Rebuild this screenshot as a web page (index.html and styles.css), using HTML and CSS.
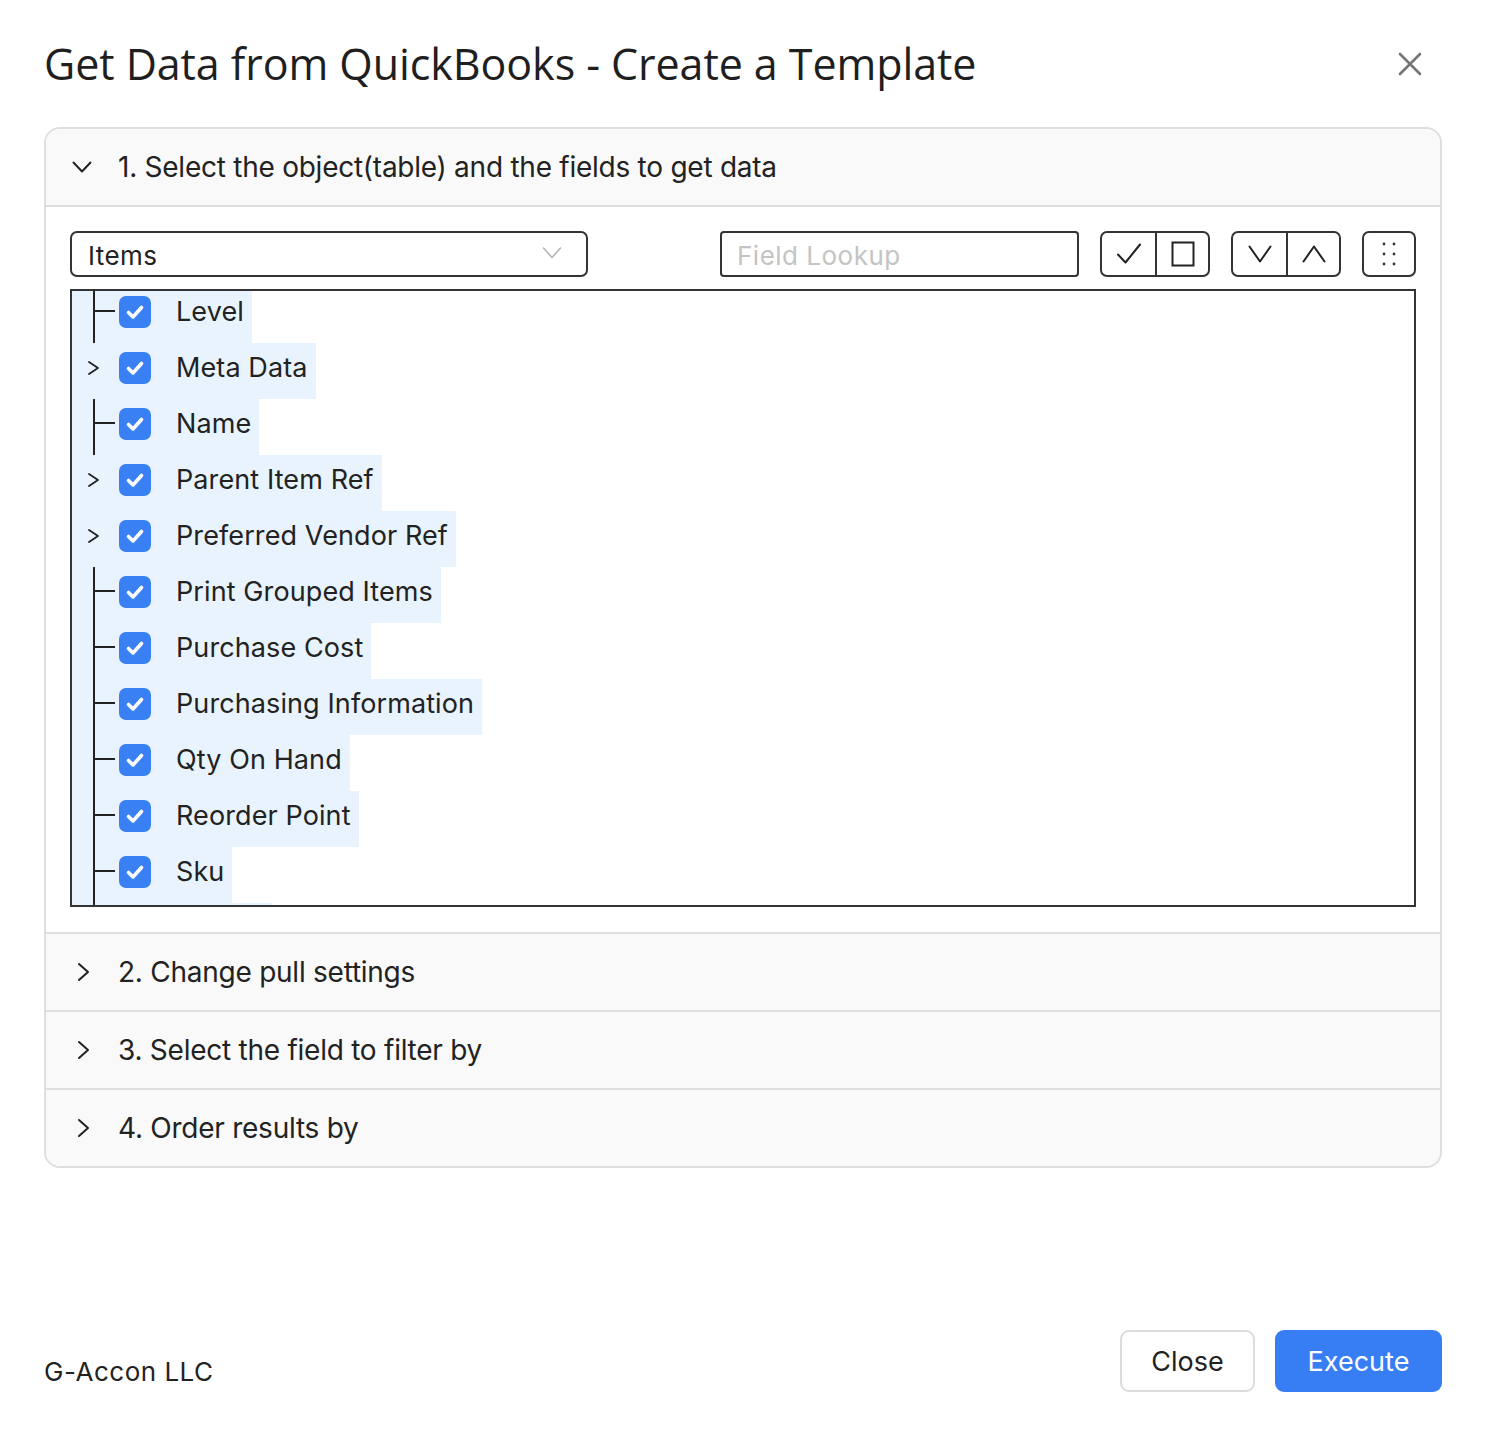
FILE: index.html
```html
<!DOCTYPE html>
<html lang="en">
<head>
<meta charset="utf-8">
<title>Get Data from QuickBooks - Create a Template</title>
<link rel="stylesheet" href="styles.css">
</head>
<body>
<div class="page">
  <header class="title-bar">
    <h1 class="title">Get Data from QuickBooks - Create a Template</h1>
    <button class="close-x" aria-label="Close">
      <svg width="24" height="24" viewBox="0 0 24 24"><path d="M2 2L22 22M22 2L2 22" stroke="#757575" stroke-width="2.6" stroke-linecap="round" fill="none"/></svg>
    </button>
  </header>

  <div class="accordion">
    <section class="acc open">
      <div class="acc-head">
        <svg class="acc-chev" width="20" height="14" viewBox="0 0 20 14"><path d="M1.5 2.5L10 11.5L18.5 2.5" stroke="#222" stroke-width="2" fill="none" stroke-linecap="round" stroke-linejoin="round"/></svg>
        <span>1. Select the object(table) and the fields to get data</span>
      </div>
      <div class="acc-body">
        <div class="toolbar">
          <div class="select">
            <span>Items</span>
            <svg width="20" height="14" viewBox="0 0 20 14"><path d="M1.5 2L10 11.5L18.5 2" stroke="#b5b5b5" stroke-width="1.6" fill="none" stroke-linecap="round" stroke-linejoin="round"/></svg>
          </div>
          <div class="lookup">Field Lookup</div>
          <div class="btn-group">
            <div class="btn-cell">
              <svg width="26" height="24" viewBox="0 0 26 24"><path d="M2 12.5L9.5 20.5L24 2.5" stroke="#222" stroke-width="2" fill="none" stroke-linecap="round" stroke-linejoin="round"/></svg>
            </div>
            <div class="btn-cell">
              <svg width="24" height="26" viewBox="0 0 24 26"><rect x="1.5" y="1.5" width="21" height="23" stroke="#222" stroke-width="2" fill="none"/></svg>
            </div>
          </div>
          <div class="btn-group">
            <div class="btn-cell">
              <svg width="24" height="18" viewBox="0 0 24 18"><path d="M1.5 1.5L12 16.5L22.5 1.5" stroke="#222" stroke-width="2" fill="none" stroke-linecap="round" stroke-linejoin="round"/></svg>
            </div>
            <div class="btn-cell">
              <svg width="24" height="18" viewBox="0 0 24 18"><path d="M1.5 16.5L12 1.5L22.5 16.5" stroke="#222" stroke-width="2" fill="none" stroke-linecap="round" stroke-linejoin="round"/></svg>
            </div>
          </div>
          <div class="btn-group">
            <div class="btn-cell">
              <svg width="14" height="24" viewBox="0 0 14 24"><g fill="#333"><circle cx="2" cy="2" r="1.4"/><circle cx="12" cy="2" r="1.4"/><circle cx="2" cy="12" r="1.4"/><circle cx="12" cy="12" r="1.4"/><circle cx="2" cy="22" r="1.4"/><circle cx="12" cy="22" r="1.4"/></g></svg>
            </div>
          </div>
        </div>

        <div class="tree">
          <ul class="tree-list">
            <li class="row leaf"><span class="node"><span class="lead"></span><span class="cb"></span><span class="label">Level</span></span></li>
            <li class="row branch"><span class="node"><span class="lead"><svg width="14" height="16" viewBox="0 0 14 16"><path d="M2 2L11 8L2 14" stroke="#222" stroke-width="1.8" fill="none" stroke-linecap="round" stroke-linejoin="round"/></svg></span><span class="cb"></span><span class="label">Meta Data</span></span></li>
            <li class="row leaf"><span class="node"><span class="lead"></span><span class="cb"></span><span class="label">Name</span></span></li>
            <li class="row branch"><span class="node"><span class="lead"><svg width="14" height="16" viewBox="0 0 14 16"><path d="M2 2L11 8L2 14" stroke="#222" stroke-width="1.8" fill="none" stroke-linecap="round" stroke-linejoin="round"/></svg></span><span class="cb"></span><span class="label">Parent Item Ref</span></span></li>
            <li class="row branch"><span class="node"><span class="lead"><svg width="14" height="16" viewBox="0 0 14 16"><path d="M2 2L11 8L2 14" stroke="#222" stroke-width="1.8" fill="none" stroke-linecap="round" stroke-linejoin="round"/></svg></span><span class="cb"></span><span class="label">Preferred Vendor Ref</span></span></li>
            <li class="row leaf"><span class="node"><span class="lead"></span><span class="cb"></span><span class="label">Print Grouped Items</span></span></li>
            <li class="row leaf"><span class="node"><span class="lead"></span><span class="cb"></span><span class="label">Purchase Cost</span></span></li>
            <li class="row leaf"><span class="node"><span class="lead"></span><span class="cb"></span><span class="label">Purchasing Information</span></span></li>
            <li class="row leaf"><span class="node"><span class="lead"></span><span class="cb"></span><span class="label">Qty On Hand</span></span></li>
            <li class="row leaf"><span class="node"><span class="lead"></span><span class="cb"></span><span class="label">Reorder Point</span></span></li>
            <li class="row leaf"><span class="node"><span class="lead"></span><span class="cb"></span><span class="label">Sku</span></span></li>
            <li class="row leaf row-peek"><span class="node"><span class="lead"></span></span></li>
          </ul>
        </div>
      </div>
    </section>

    <section class="acc">
      <div class="acc-head">
        <svg class="acc-chev closed" width="20" height="20" viewBox="0 0 20 20"><path d="M5 2L14 10L5 18" stroke="#222" stroke-width="2" fill="none" stroke-linecap="round" stroke-linejoin="round"/></svg>
        <span>2. Change pull settings</span>
      </div>
    </section>
    <section class="acc">
      <div class="acc-head">
        <svg class="acc-chev closed" width="20" height="20" viewBox="0 0 20 20"><path d="M5 2L14 10L5 18" stroke="#222" stroke-width="2" fill="none" stroke-linecap="round" stroke-linejoin="round"/></svg>
        <span>3. Select the field to filter by</span>
      </div>
    </section>
    <section class="acc">
      <div class="acc-head">
        <svg class="acc-chev closed" width="20" height="20" viewBox="0 0 20 20"><path d="M5 2L14 10L5 18" stroke="#222" stroke-width="2" fill="none" stroke-linecap="round" stroke-linejoin="round"/></svg>
        <span>4. Order results by</span>
      </div>
    </section>
  </div>

  <footer class="footer">
    <span class="brand">G-Accon LLC</span>
    <div class="actions">
      <button class="btn btn-close">Close</button>
      <button class="btn btn-exec">Execute</button>
    </div>
  </footer>
</div>
</body>
</html>
```

FILE: styles.css
```css
* { box-sizing: border-box; }
html, body { margin: 0; padding: 0; background: #fff; }
body {
  font-family: Inter, "Liberation Sans", Arial, sans-serif;
  color: #222;
}
.page {
  width: 1490px;
  height: 1434px;
  padding: 0 48px 42px 44px;
  display: flex;
  flex-direction: column;
}
.title-bar {
  height: 127px;
  display: flex;
  align-items: center;
  justify-content: space-between;
}
.title {
  margin: 0;
  font-family: "Open Sans", Inter, sans-serif;
  font-weight: 400;
  font-size: 43px;
  letter-spacing: -0.07px;
  color: #1f1f1f;
  line-height: 1;
}
.close-x {
  border: 0;
  background: none;
  padding: 0;
  margin-right: 20px;
  width: 24px;
  height: 24px;
  display: flex;
  align-items: center;
  justify-content: center;
}

.accordion {
  border: 2px solid #dedede;
  border-radius: 16px;
  overflow: hidden;
}
.acc + .acc { border-top: 2px solid #dedede; }
.acc-head {
  height: 76px;
  background: #f9f9f9;
  display: flex;
  align-items: center;
  padding-left: 26px;
  font-size: 28px;
  letter-spacing: -0.25px;
  color: #222;
}
.acc-chev { width: 20px; margin-right: 26px; flex: none; }
.acc-chev.closed { margin-left: 2px; margin-right: 24px; }
.acc.open .acc-head {
  height: 78px;
  border-bottom: 2px solid #dedede;
}
.acc-body {
  padding: 24px 24px 25px 24px;
}
.toolbar {
  display: flex;
  align-items: stretch;
  height: 46px;
  gap: 21px;
}
.select {
  width: 518px;
  margin-right: auto;
  border: 2px solid #333;
  border-radius: 7px;
  display: flex;
  align-items: center;
  justify-content: space-between;
  padding: 3px 24px 0 16px;
  font-size: 26px;
  letter-spacing: 0.4px;
}
.select svg { margin-top: -6px; }
.lookup {
  width: 359px;
  border: 2px solid #333;
  border-radius: 4px;
  display: flex;
  align-items: center;
  padding: 2px 0 0 15px;
  font-size: 26px;
  letter-spacing: 0.5px;
  color: #c4c4c4;
}
.btn-group {
  display: flex;
  border: 2px solid #333;
  border-radius: 7px;
}
.btn-cell {
  width: 53px;
  display: flex;
  align-items: center;
  justify-content: center;
}
.btn-cell + .btn-cell { border-left: 2px solid #333; }
.btn-group:last-child .btn-cell { width: 50px; }

.tree {
  margin-top: 12px;
  height: 618px;
  border: 2px solid #333;
  overflow: hidden;
}
.tree-list {
  list-style: none;
  margin: -4px 0 0 0;
  padding: 0;
}
.row {
  height: 56px;
  display: flex;
}
.node {
  display: flex;
  align-items: center;
  background: #e8f3fd;
  padding-right: 8px;
  padding-bottom: 7px;
}
.row-peek .node { width: 200px; }
.lead {
  width: 45px;
  height: 49px;
  position: relative;
  flex: none;
  display: flex;
  align-items: center;
  padding-left: 15px;
}
.leaf .lead::before {
  content: "";
  position: absolute;
  left: 21px;
  top: 0;
  bottom: -7px;
  width: 2px;
  background: #222;
}
.leaf .lead::after {
  content: "";
  position: absolute;
  left: 23px;
  top: 23px;
  width: 20px;
  height: 2px;
  background: #222;
}
.cb {
  width: 32px;
  height: 32px;
  border-radius: 7px;
  background: #3880f4;
  flex: none;
  margin-left: 2px;
  margin-right: 25px;
  background-image: url("data:image/svg+xml;utf8,<svg xmlns='http://www.w3.org/2000/svg' width='32' height='32' viewBox='0 0 32 32'><path d='M9.5 16.5L14 21L22.5 11.5' stroke='white' stroke-width='3.6' fill='none' stroke-linecap='round' stroke-linejoin='round'/></svg>");
  background-repeat: no-repeat;
}
.label {
  font-size: 27px;
  letter-spacing: 0.1px;
  color: #222;
  white-space: nowrap;
}

.footer {
  margin-top: auto;
  display: flex;
  align-items: flex-end;
  justify-content: space-between;
}
.brand {
  font-size: 26px;
  letter-spacing: 0.5px;
  color: #222;
  margin-bottom: 5px;
}
.actions { display: flex; gap: 20px; }
.btn {
  height: 62px;
  font-family: Inter, "Liberation Sans", sans-serif;
  font-size: 27px;
  letter-spacing: 0;
  border-radius: 9px;
  cursor: pointer;
}
.btn-close {
  width: 135px;
  background: #fff;
  border: 2px solid #dcdcdc;
  color: #222;
}
.btn-exec {
  width: 167px;
  background: #377ef5;
  border: 0;
  color: #fff;
}
```
